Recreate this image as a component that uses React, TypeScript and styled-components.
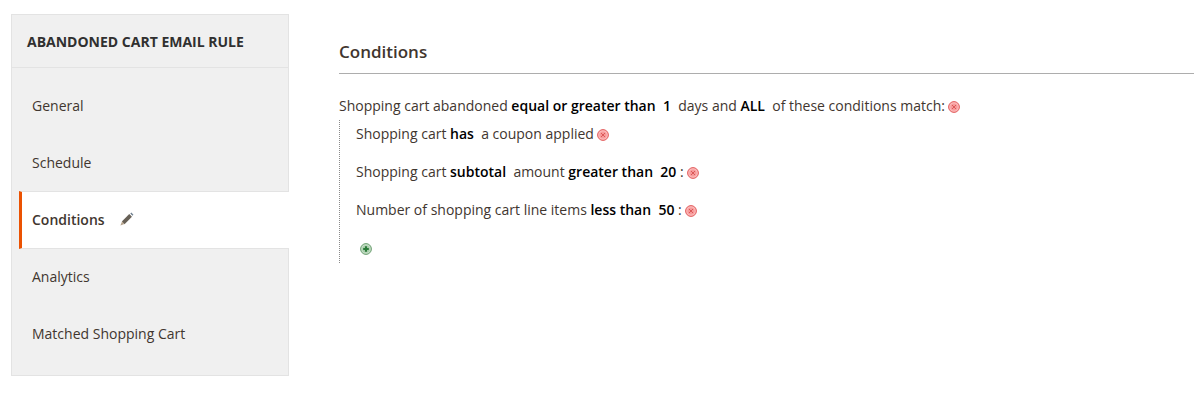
import React from 'react';
import styled, { createGlobalStyle } from 'styled-components';

const GlobalStyle = createGlobalStyle`
  html, body {
    margin: 0;
    padding: 0;
    background: #fff;
  }

  body {
    font-family: 'Open Sans', 'Liberation Sans', sans-serif;
    font-size: 14px;
    color: #41362f;
  }

  * {
    box-sizing: border-box;
  }
`;

const Page = styled.div`
  display: flex;
  align-items: flex-start;
  width: 1199px;
  height: 403px;
  padding: 14px 5px 0 11px;
  overflow: hidden;
`;

const Sidebar = styled.nav`
  flex: 0 0 278px;
  height: 362px;
  background: #f0f0f0;
  border: 1px solid #e3e3e3;
`;

const SidebarTitle = styled.div`
  height: 53px;
  padding-left: 15px;
  display: flex;
  align-items: center;
  font-size: 14px;
  font-weight: 700;
  color: #303030;
  border-bottom: 1px solid #e3e3e3;
`;

const Tabs = styled.ul`
  list-style: none;
  margin: 0;
  padding: 9px 0 0;
`;

const Tab = styled.li<{ $active?: boolean }>`
  display: flex;
  align-items: center;
  gap: 15px;
  height: ${({ $active }) => ($active ? '58px' : '57px')};
  padding-left: ${({ $active }) => ($active ? '10px' : '20px')};
  font-weight: ${({ $active }) => ($active ? 600 : 400)};
  ${({ $active }) =>
    $active &&
    `
    margin: 0 -1px -1px 7px;
    padding-bottom: 2px;
    background: #fff;
    border-left: 3px solid #eb5202;
    border-top: 1px solid #e3e3e3;
    border-bottom: 1px solid #e3e3e3;
    position: relative;
  `}
`;

const Main = styled.main`
  flex: 1;
  margin-left: 50px;
  padding-top: 26px;
`;

const Heading = styled.h2`
  margin: 0 0 22px;
  height: 34px;
  font-size: 17px;
  font-weight: 600;
  line-height: 24px;
  color: #41362f;
  border-bottom: 1px solid #adadad;
`;

const Line = styled.div`
  height: 20px;
  line-height: 20px;
  white-space: pre;
`;

const Value = styled.b`
  font-weight: 600;
  color: #000;
`;

const Group = styled.div`
  margin-top: 4px;
  padding: 4px 0 4px 16px;
  border-left: 1px dotted #8a8a8a;
`;

const Condition = styled(Line)`
  margin-bottom: 18px;
`;

const IconWrap = styled.svg<{ $left?: number }>`
  display: inline-block;
  vertical-align: -2px;
  margin-left: ${({ $left }) => $left ?? 4}px;
`;

const AddRow = styled.div`
  display: flex;
  height: 21px;
  padding-top: 1px;
  align-items: center;
`;

const RemoveIcon = () => (
  <IconWrap $left={3} width="12" height="12" viewBox="0 0 12 12">
    <circle cx="6" cy="6" r="5.4" fill="#fbb9b9" stroke="#e25b5b" />
    <circle cx="6" cy="6" r="3.6" fill="#f79a9a" />
    <path d="M4 4l4 4M8 4l-4 4" stroke="#d65050" strokeWidth="0.9" />
  </IconWrap>
);

const AddIcon = () => (
  <IconWrap $left={4} width="12" height="12" viewBox="0 0 12 12">
    <circle cx="6" cy="6" r="5.4" fill="#c4dcc5" stroke="#6b9f70" />
    <circle cx="6" cy="6" r="3.6" fill="#a5cba8" />
    <path d="M6 3.2v5.6M3.2 6h5.6" stroke="#2a7a38" strokeWidth="2" />
  </IconWrap>
);

const PencilIcon = () => (
  <svg width="14" height="14" viewBox="0 0 14 14">
    <path d="M3.2 10.8L10.6 3.4" stroke="#676056" strokeWidth="3.8" />
    <path d="M11.4 2.6l1-1" stroke="#6f7f8f" strokeWidth="3" />
    <path d="M2 9.6l2.4 2.4L.4 13.6z" fill="#b7a48c" />
  </svg>
);

export default function App() {
  return (
    <Page>
      <GlobalStyle />
      <Sidebar>
        <SidebarTitle>ABANDONED CART EMAIL RULE</SidebarTitle>
        <Tabs>
          <Tab>General</Tab>
          <Tab>Schedule</Tab>
          <Tab $active>
            Conditions
            <PencilIcon />
          </Tab>
          <Tab>Analytics</Tab>
          <Tab>Matched Shopping Cart</Tab>
        </Tabs>
      </Sidebar>
      <Main>
        <Heading>Conditions</Heading>
        <Line>
          Shopping cart abandoned <Value>equal or greater than</Value>{'  '}
          <Value>1</Value>{'  '}days and <Value>ALL</Value>{'  '}of these conditions match:
          <RemoveIcon />
        </Line>
        <Group>
          <Condition>
            Shopping cart <Value>has</Value>{'  '}a coupon applied
            <RemoveIcon />
          </Condition>
          <Condition>
            Shopping cart <Value>subtotal</Value>{'  '}amount <Value>greater than</Value>{'  '}
            <Value>20</Value> :
            <RemoveIcon />
          </Condition>
          <Condition>
            Number of shopping cart line items <Value>less than</Value>{'  '}
            <Value>50</Value> :
            <RemoveIcon />
          </Condition>
          <AddRow>
            <AddIcon />
          </AddRow>
        </Group>
      </Main>
    </Page>
  );
}
